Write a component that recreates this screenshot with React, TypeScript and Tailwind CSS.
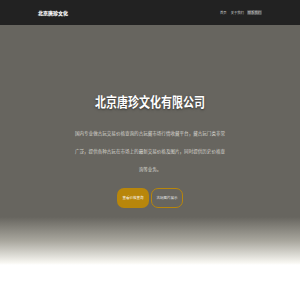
import React from "react"

const navItems = ["首页", "关于我们", "联系我们"]

const introLines = [
  "国内专业做古玩交易价格查询的古玩藏市场行情收藏平台，藏古玩门类非常",
  "广泛，提供各种古玩在市场上的最新交易价格及图片，同时提供历史价格查",
  "询等业务。",
]

export default function App() {
  return (
    <div className="min-h-[300px] bg-white font-['Noto_Sans_CJK_SC',sans-serif]">
      <header className="h-[25px] bg-[#222222]">
        <div className="mx-auto flex h-full w-[224px] items-center justify-between">
          <div className="text-[5px] font-bold leading-none text-white [text-shadow:0_0_1px_rgba(255,255,255,0.6)]">北京唐珍文化</div>
          <nav className="flex items-center gap-[2px]">
            {navItems.map((item, i) => (
              <span
                key={item}
                className={
                  "rounded-[1px] px-[1px] py-[1px] text-[3.3px] leading-none text-[#cfcfcf] " +
                  (i === 2 ? "bg-[#4a4a4a]" : "")
                }
              >
                {item}
              </span>
            ))}
          </nav>
        </div>
      </header>

      <section className="flex h-[240px] flex-col items-center bg-[linear-gradient(to_bottom,#67655f_0%,#67655f_80%,#a9a79e_90%,#f7f6f1_99%,#ffffff_100%)] pt-[68px]">
        <h1 className="scale-y-[1.2] text-[11px] font-bold leading-[16px] text-white [text-shadow:0_1px_2px_rgba(0,0,0,0.5)]">
          北京唐珍文化有限公司
        </h1>
        <p className="mt-[15px] text-center text-[4.55px] leading-[18px] text-[#d8d6d0]">
          {introLines.map((line) => (
            <span key={line} className="block whitespace-nowrap">{line}</span>
          ))}
        </p>
        <div className="mt-[10px] flex gap-[2px]">
          <button className="h-[20px] w-[32px] rounded-[7px] bg-[#b8860b] text-[3.5px] text-white">查看价格查询</button>
          <button className="h-[20px] w-[32px] rounded-[7px] border border-[#b8860b] text-[3.5px] text-[#e5e5e5]">古玩图片展示</button>
        </div>
      </section>
    </div>
  )
}
